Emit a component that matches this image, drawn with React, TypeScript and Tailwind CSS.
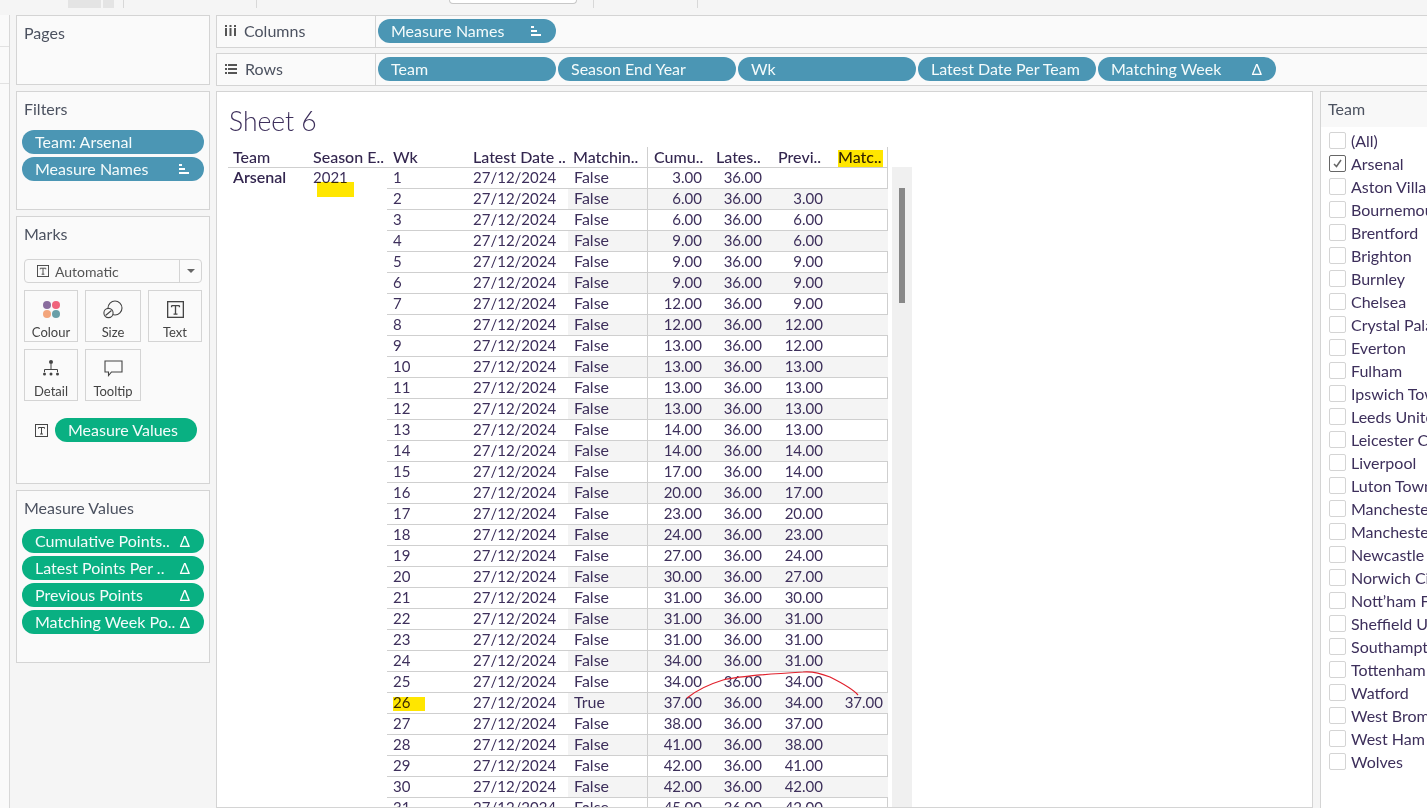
import type { ReactNode } from "react"

const rows: [number, number, number | null][] = [
  [1, 3, null], [2, 6, 3], [3, 6, 6], [4, 9, 6], [5, 9, 9], [6, 9, 9], [7, 12, 9], [8, 12, 12],
  [9, 13, 12], [10, 13, 13], [11, 13, 13], [12, 13, 13], [13, 14, 13], [14, 14, 14], [15, 17, 14],
  [16, 20, 17], [17, 23, 20], [18, 24, 23], [19, 27, 24], [20, 30, 27], [21, 31, 30], [22, 31, 31],
  [23, 31, 31], [24, 34, 31], [25, 34, 34], [26, 37, 34], [27, 38, 37], [28, 41, 38], [29, 42, 41],
  [30, 42, 42], [31, 45, 42],
]

const teams = [
  "(All)", "Arsenal", "Aston Villa", "Bournemouth", "Brentford", "Brighton", "Burnley", "Chelsea",
  "Crystal Palace", "Everton", "Fulham", "Ipswich Town", "Leeds United", "Leicester City", "Liverpool",
  "Luton Town", "Manchester City", "Manchester United", "Newcastle United", "Norwich City",
  "Nott’ham Forest", "Sheffield United", "Southampton", "Tottenham", "Watford", "West Brom", "West Ham",
  "Wolves",
]

function SortIcon() {
  return (
    <svg width="11" height="10" viewBox="0 0 11 10" fill="#fff">
      <rect x="0" y="0" width="3" height="2" />
      <rect x="0" y="4" width="6" height="2" />
      <rect x="0" y="8" width="10" height="2" />
    </svg>
  )
}

function Pill({ label, kind = "blue", icon, width = "w-[182px]" }: { label: string; kind?: "blue" | "green"; icon?: ReactNode; width?: string }) {
  const color = kind === "blue" ? "bg-[#4b96b4]" : "bg-[#09b082]"
  return (
    <div className={`${color} ${width} h-6 shrink-0 rounded-full flex items-center justify-between pl-[13px] pr-[14px] text-[16px] leading-6 text-[#f4fbfb] whitespace-nowrap overflow-hidden`}>
      <span>{label}</span>
      {icon}
    </div>
  )
}

const delta = <span className="text-[15px] text-white">Δ</span>

function TBox({ size = 13 }: { size?: number }) {
  return (
    <svg width={size} height={size} viewBox="0 0 13 13" fill="none" stroke="#444" strokeWidth="1">
      <rect x="0.5" y="0.5" width="12" height="12" />
      <path d="M3.5 3.5h6M6.5 3.5v6.5M5 10h3M3.5 3.5v1.2M9.5 3.5v1.2" />
    </svg>
  )
}

function MarkCard({ label, children }: { label: string; children: ReactNode }) {
  return (
    <div className="w-full h-[52px] border border-[#d4d4d4] flex flex-col items-center text-[13px] leading-4 text-[#444]">
      <div className="h-[33px] flex items-center justify-center pt-[3px]">{children}</div>
      <span>{label}</span>
    </div>
  )
}

function Panel({ title, className, children }: { title: string; className: string; children?: ReactNode }) {
  return (
    <section className={`border border-[#d4d4d4] bg-[#fafafa] ${className}`}>
      <h2 className="pl-[7px] pt-[7px] h-[28px] text-[16px] leading-5 font-normal text-[#4c5260]">{title}</h2>
      {children}
    </section>
  )
}

function App() {
  return (
    <div className="relative w-[1427px] h-[808px] overflow-hidden bg-[#f5f5f5] font-['Lato',sans-serif]">
      {/* top toolbar leftovers */}
      <div className="h-[15px] flex">
        <div className="ml-[68px] w-[33px] h-2 bg-[#e4e4e4]" />
        <div className="ml-[2px] w-[11px] h-2 bg-[#e4e4e4]" />
        <div className="ml-[9px] w-px h-2 bg-[#d8d8d8]" />
        <div className="ml-[132px] w-px h-2 bg-[#d8d8d8]" />
        <div className="ml-[192px] w-[128px] h-1 bg-white border border-t-0 border-[#c8c8c8] rounded-b-sm" />
        <div className="ml-[16px] w-px h-2 bg-[#d8d8d8]" />
        <div className="ml-[103px] w-px h-2 bg-[#d8d8d8]" />
      </div>

      <div className="flex h-[793px]">
        {/* collapsed data pane */}
        <div className="w-[10px] shrink-0 border-r border-[#d8d8d8] bg-[#fafafa] flex flex-col">
          <div className="h-[32px] border-b border-[#e2e2e2]" />
          <div className="h-[37px] border-b border-[#e2e2e2]" />
        </div>

        {/* cards column */}
        <div className="ml-[6px] w-[194px] shrink-0 flex flex-col">
          <Panel title="Pages" className="h-[70px]" />
          <Panel title="Filters" className="mt-[6px] h-[119px]">
            <div className="mt-[10px] ml-[5px] flex flex-col gap-[3px]">
              <Pill label="Team: Arsenal" />
              <Pill label="Measure Names" icon={<SortIcon />} />
            </div>
          </Panel>
          <Panel title="Marks" className="mt-[6px] h-[268px]">
            <div className="mx-[7px] mt-[14px] h-6 border border-[#d4d4d4] rounded-sm flex items-center text-[14px] text-[#555]">
              <span className="ml-3 mr-[6px] flex"><TBox size={12} /></span>
              <span className="flex-1">Automatic</span>
              <span className="w-[22px] h-full border-l border-[#d4d4d4] flex items-center justify-center">
                <span className="w-0 h-0 border-x-[4px] border-x-transparent border-t-[4px] border-t-[#666]" />
              </span>
            </div>
            <div className="mx-[7px] mt-[7px] grid grid-cols-[54px_56px_54px] gap-x-[7px] gap-y-[7px]">
              <MarkCard label="Colour">
                <div className="grid grid-cols-2 gap-[1px]">
                  <span className="w-2 h-2 rounded-full bg-[#8a6d9e]" />
                  <span className="w-2 h-2 rounded-full bg-[#f0647c]" />
                  <span className="w-2 h-2 rounded-full bg-[#f3a57c]" />
                  <span className="w-2 h-2 rounded-full bg-[#6a9fa8]" />
                </div>
              </MarkCard>
              <MarkCard label="Size">
                <svg width="20" height="19" viewBox="0 0 20 19" fill="none" stroke="#444" strokeWidth="1.1">
                  <circle cx="12" cy="8" r="7" />
                  <circle cx="5.5" cy="13" r="4.6" fill="#fafafa" />
                  <path d="M2.5 15.5l6-5" />
                </svg>
              </MarkCard>
              <MarkCard label="Text"><TBox size={17} /></MarkCard>
              <MarkCard label="Detail">
                <svg width="18" height="18" viewBox="0 0 18 18" fill="#444" stroke="#444">
                  <circle cx="9" cy="3" r="2" stroke="none" />
                  <path d="M9 5v6M2.5 13v-2.5h13V13" fill="none" strokeWidth="1" />
                  <circle cx="2.5" cy="15" r="1.5" stroke="none" />
                  <circle cx="9" cy="15" r="1.5" stroke="none" />
                  <circle cx="15.5" cy="15" r="1.5" stroke="none" />
                </svg>
              </MarkCard>
              <MarkCard label="Tooltip">
                <svg width="19" height="17" viewBox="0 0 19 17" fill="none" stroke="#444" strokeWidth="1.1">
                  <path d="M1 1h17v11H7.5L4.5 15.5V12H1z" />
                </svg>
              </MarkCard>
            </div>
            <div className="mt-[17px] ml-[18px] flex items-center gap-[7px]">
              <TBox />
              <Pill label="Measure Values" kind="green" width="w-[142px]" />
            </div>
          </Panel>
          <Panel title="Measure Values" className="mt-[6px] h-[173px]">
            <div className="mt-[10px] ml-[5px] flex flex-col gap-[3px]">
              <Pill label="Cumulative Points.." kind="green" icon={delta} />
              <Pill label="Latest Points Per .." kind="green" icon={delta} />
              <Pill label="Previous Points" kind="green" icon={delta} />
              <Pill label="Matching Week Po.." kind="green" icon={delta} />
            </div>
          </Panel>
        </div>

        {/* shelves + view */}
        <div className="ml-[6px] flex-1 min-w-0 flex flex-col">
          <div className="h-[33px] border border-r-0 border-[#d4d4d4] bg-[#fafafa] flex items-start">
            <div className="w-[159px] h-full shrink-0 border-r border-[#d4d4d4] flex items-center pl-2 pb-[2px] text-[16px] text-[#4c5260]">
              <svg className="mr-[8px]" width="11" height="11" viewBox="0 0 11 11" fill="#555">
                <rect x="0" y="0" width="2" height="2" /><rect x="0" y="3" width="2" height="8" />
                <rect x="4.5" y="0" width="2" height="2" /><rect x="4.5" y="3" width="2" height="8" />
                <rect x="9" y="0" width="2" height="2" /><rect x="9" y="3" width="2" height="8" />
              </svg>
              Columns
            </div>
            <div className="ml-[2px] mt-[3px]"><Pill label="Measure Names" width="w-[178px]" icon={<SortIcon />} /></div>
          </div>
          <div className="mt-[5px] h-[33px] border border-r-0 border-[#d4d4d4] bg-[#fafafa] flex items-start">
            <div className="w-[159px] h-full shrink-0 border-r border-[#d4d4d4] flex items-center pl-2 pb-[2px] text-[16px] text-[#4c5260]">
              <svg className="mr-[8px]" width="12" height="10" viewBox="0 0 12 10" fill="#555">
                <rect x="0" y="0" width="2" height="2" /><rect x="3" y="0" width="9" height="2" />
                <rect x="0" y="4" width="2" height="2" /><rect x="3" y="4" width="9" height="2" />
                <rect x="0" y="8" width="2" height="2" /><rect x="3" y="8" width="9" height="2" />
              </svg>
              Rows
            </div>
            <div className="ml-[2px] mt-[3px] flex gap-[2px]">
              <Pill label="Team" width="w-[178px]" />
              <Pill label="Season End Year" width="w-[178px]" />
              <Pill label="Wk" width="w-[178px]" />
              <Pill label="Latest Date Per Team" width="w-[178px]" />
              <Pill label="Matching Week" width="w-[178px]" icon={delta} />
            </div>
          </div>

          <div className="mt-[5px] flex-1 min-h-0 flex">
            {/* view */}
            <div className="w-[1097px] shrink-0 border border-[#d4d4d4] bg-white pl-[11px] overflow-hidden text-[15px] text-[#3d2f5b]">
              <div className="h-[55px] pt-[12px] pl-px text-[26.5px] leading-[34px] font-light text-[#3d2f5b]">Sheet 6</div>
              <div className="flex">
                <div className="w-[660px] shrink-0 border-r border-[#cfcfcf]">
                  <div className="h-[21px] grid grid-cols-[80px_80px_80px_100px_80px_60px_60px_60px_60px] border-b border-[#cfcfcf] text-[16px] font-medium leading-5 text-[#33264f] whitespace-nowrap">
                    <span className="pl-[5px]">Team</span>
                    <span className="pl-[5px]">Season E..</span>
                    <span className="pl-[5px]">Wk</span>
                    <span className="pl-[5px]">Latest Date ..</span>
                    <span className="pl-[5px] border-r border-[#cfcfcf]">Matchin..</span>
                    <span className="pl-[6px]">Cumu..</span>
                    <span className="pl-[8px]">Lates..</span>
                    <span className="pl-[10px]">Previ..</span>
                    <span className="pl-[10px]">Matc..</span>
                  </div>
                  <div className="flex">
                    <div className="w-[159px] shrink-0 grid grid-cols-[80px_79px] h-fit leading-[18px]">
                      <span className="pl-[5px] text-[16px] font-semibold text-[#33264f]">Arsenal</span>
                      <span className="pl-[5px]">2021</span>
                    </div>
                    <div className="flex-1">
                      {rows.map(([wk, cum, prev]) => (
                        <div key={wk} className="h-[21px] grid grid-cols-[81px_100px_80px_60px_60px_60px_60px] border-b border-[#cfcfcf] leading-[18px]">
                          <span className="pl-[6px]">{wk}</span>
                          <span className="pl-[5px]">27/12/2024</span>
                          <span className={`pl-[6px] text-[16px] border-r border-[#cfcfcf] ${wk % 2 === 0 ? "bg-[#f4f4f4]" : ""}`}>{wk === 26 ? "True" : "False"}</span>
                          <span className={`text-right pr-[6px] ${wk % 2 === 0 ? "bg-[#f4f4f4]" : ""}`}>{cum}.00</span>
                          <span className={`text-right pr-[6px] ${wk % 2 === 0 ? "bg-[#f4f4f4]" : ""}`}>36.00</span>
                          <span className={`text-right pr-[5px] ${wk % 2 === 0 ? "bg-[#f4f4f4]" : ""}`}>{prev === null ? "" : `${prev}.00`}</span>
                          <span className={`text-right pr-[5px] ${wk % 2 === 0 ? "bg-[#f4f4f4]" : ""}`}>{wk === 26 ? "37.00" : ""}</span>
                        </div>
                      ))}
                    </div>
                  </div>
                </div>
                {/* scrollbar */}
                <div className="ml-[4px] mt-[20px] w-5 bg-[#f0f0f0] pl-[7px] pt-[21px]">
                  <div className="w-[6px] h-[115px] bg-[#888888]" />
                </div>
              </div>
            </div>

            {/* team filter */}
            <div className="ml-[7px] flex-1 min-w-0 border-l border-t border-[#d4d4d4] bg-white overflow-hidden">
              <div className="h-[35px] bg-[#f8f8f8] pl-[7px] pt-[7px] text-[16px] leading-5 text-[#4c5260]">Team</div>
              <div className="pl-2 pt-[2px]">
                {teams.map((t) => (
                  <div key={t} className="h-[23px] flex items-center gap-[5px] whitespace-nowrap text-[16px] text-[#3d2f5b]">
                    <span className={`w-[17px] h-[17px] shrink-0 rounded-[2px] border bg-white flex items-center justify-center ${t === "Arsenal" ? "border-[#666]" : "border-[#d4d4d4]"}`}>
                      {t === "Arsenal" && (
                        <svg width="9" height="9" viewBox="0 0 9 9" fill="none" stroke="#666" strokeWidth="1.5">
                          <path d="M1 5l2.5 2.5L8 1" />
                        </svg>
                      )}
                    </span>
                    {t}
                  </div>
                ))}
              </div>
            </div>
          </div>
        </div>
      </div>

      {/* hand drawn annotations over the screenshot */}
      <div className="absolute left-[317px] top-[182px] w-[37px] h-[15px] bg-[#ffe600] mix-blend-multiply" />
      <div className="absolute left-[393px] top-[697px] w-[32px] h-[14px] bg-[#ffe600] mix-blend-multiply" />
      <div className="absolute left-[838px] top-[150px] w-[45px] h-[17px] bg-[#ffe600] mix-blend-multiply" />
      <svg className="absolute left-[680px] top-[665px]" width="185" height="40" viewBox="0 0 185 40" fill="none" stroke="#e0202c" strokeWidth="1.2">
        <path d="M7 33C18 24 30 19 43 15C60 11 88 9 123 7C132 6 140 8 150 12C160 17 172 23 178 30" />
      </svg>
    </div>
  )
}

export default App
